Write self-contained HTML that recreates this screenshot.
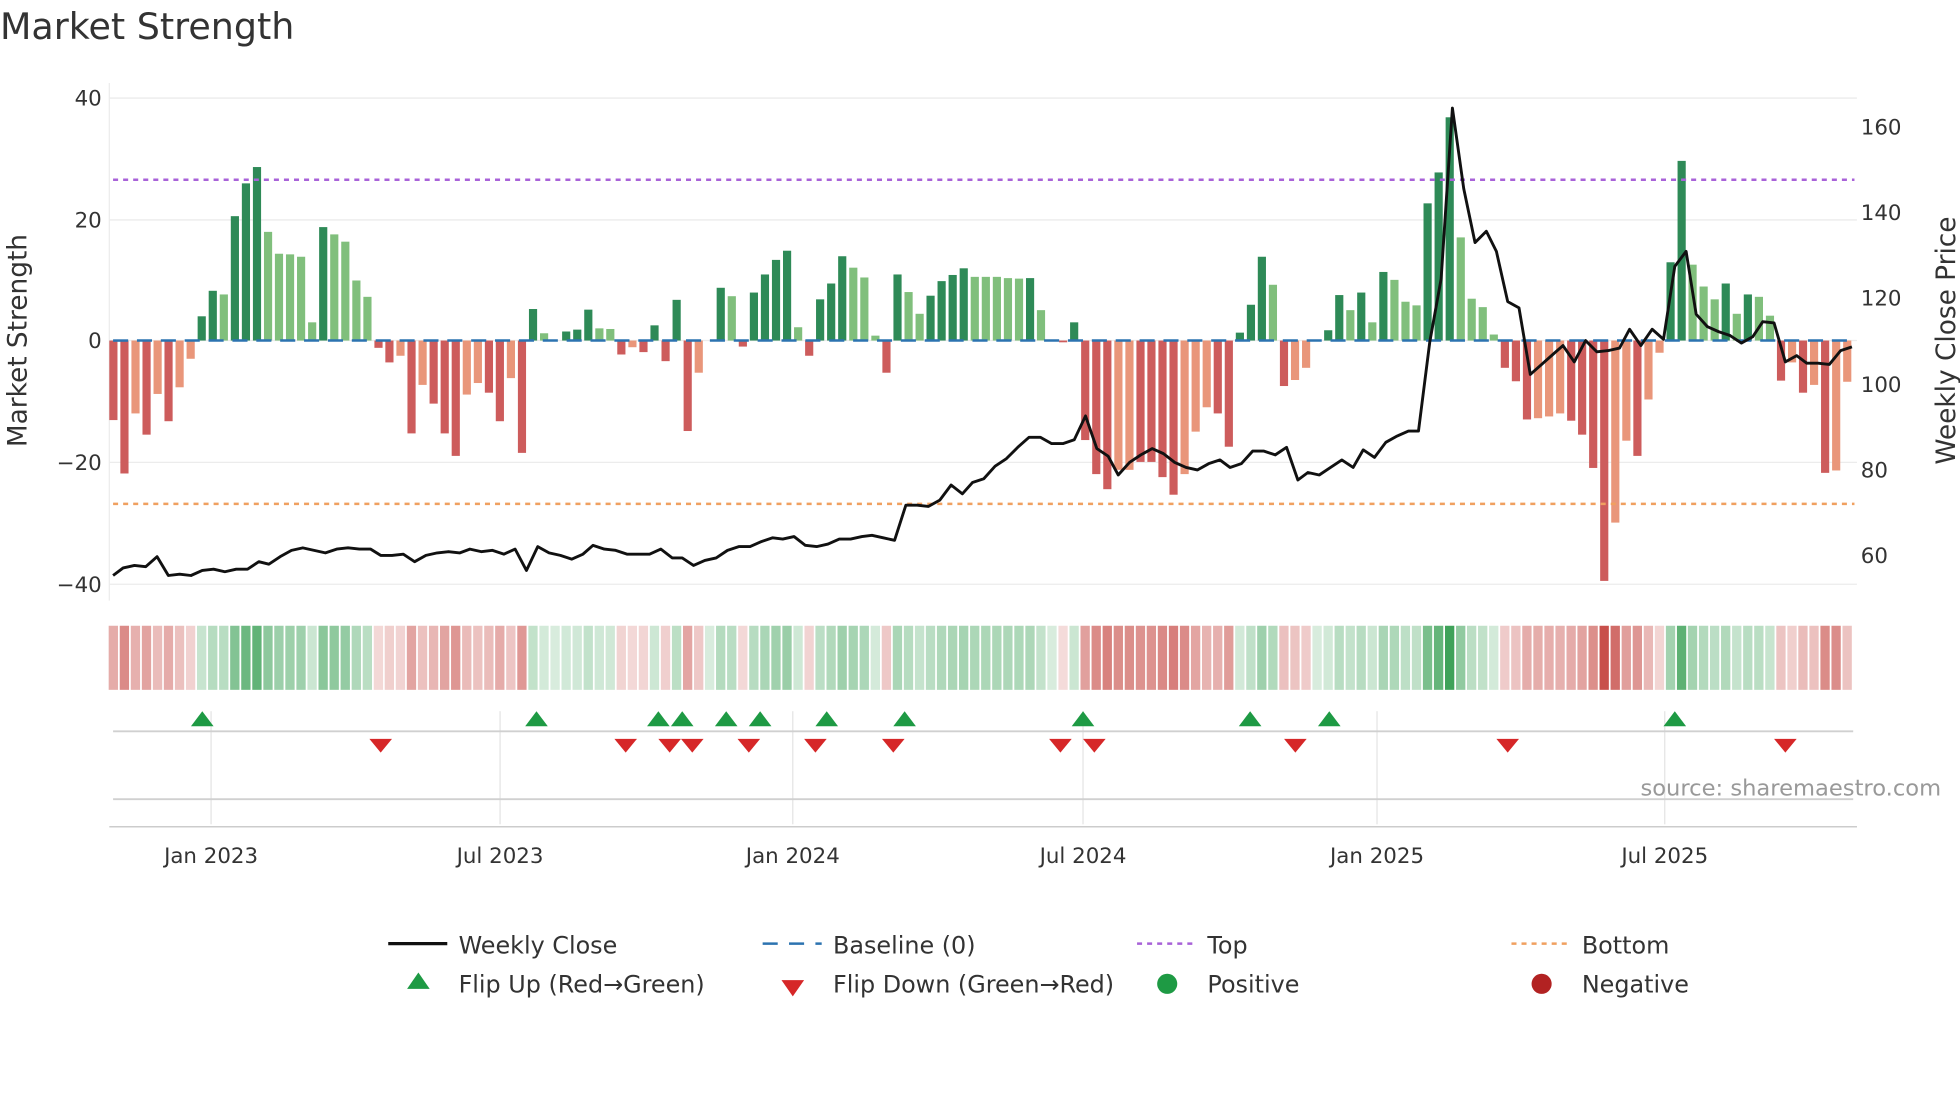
<!DOCTYPE html>
<html><head><meta charset="utf-8"><style>
html,body{margin:0;padding:0;background:#fff;}
svg{display:block;font-family:"DejaVu Sans","Liberation Sans",sans-serif;}
</style></head><body>
<svg id="s" width="1960" height="1102" viewBox="0 0 1560 877" xmlns="http://www.w3.org/2000/svg">
<rect width="1560" height="877" fill="#fff"/>
<text x="0" y="31" font-size="29" fill="#333">Market Strength</text>
<g stroke="#ececec" stroke-width="1">
<line x1="87" y1="78" x2="1478" y2="78"/><line x1="87" y1="175" x2="1478" y2="175"/>
<line x1="87" y1="271" x2="1478" y2="271"/><line x1="87" y1="368" x2="1478" y2="368"/>
<line x1="87" y1="465" x2="1478" y2="465"/>
<line x1="87" y1="66" x2="87" y2="478"/>
</g>
<g font-size="17" fill="#333" text-anchor="end">
<text x="81" y="84">40</text><text x="81" y="181">20</text><text x="81" y="277">0</text>
<text x="81" y="374">−20</text><text x="81" y="471">−40</text>
</g>
<g font-size="17" fill="#333">
<text x="1481" y="107">160</text><text x="1481" y="175">140</text><text x="1481" y="243">120</text>
<text x="1481" y="312">100</text><text x="1481" y="380">80</text><text x="1481" y="448">60</text>
</g>
<text transform="translate(21,271) rotate(-90)" font-size="21" fill="#333" text-anchor="middle">Market Strength</text>
<text transform="translate(1556,271) rotate(-90)" font-size="21" fill="#333" text-anchor="middle">Weekly Close Price</text>
<g id="bars"></g>
<line x1="90" y1="143" x2="1476" y2="143" stroke="#a862d8" stroke-width="2" stroke-dasharray="4,4"/>
<line x1="90" y1="401" x2="1476" y2="401" stroke="#f0a060" stroke-width="2" stroke-dasharray="4,4"/>
<line x1="90" y1="271" x2="1476" y2="271" stroke="#2c73b0" stroke-width="2" stroke-dasharray="12,7"/>
<polyline id="price" fill="none" stroke="#111" stroke-width="2.3" stroke-linejoin="round" points=""/>
<g id="heat"></g>
<g stroke="#e4e4e4" stroke-width="1">
<line x1="168" y1="566" x2="168" y2="656"/><line x1="398" y1="566" x2="398" y2="656"/>
<line x1="631" y1="566" x2="631" y2="656"/><line x1="862" y1="566" x2="862" y2="656"/>
<line x1="1096" y1="566" x2="1096" y2="656"/><line x1="1325" y1="566" x2="1325" y2="656"/>
</g>
<line x1="90" y1="582" x2="1475" y2="582" stroke="#d0d0d0" stroke-width="1.5"/>
<line x1="90" y1="636" x2="1475" y2="636" stroke="#d0d0d0" stroke-width="1.5"/>
<line x1="87" y1="658" x2="1478" y2="658" stroke="#ccc" stroke-width="1.2"/>
<g id="flips"></g>
<text x="1545" y="633" font-size="18" fill="#999" text-anchor="end">source: sharemaestro.com</text>
<g font-size="17" fill="#333" text-anchor="middle">
<text x="168" y="687">Jan 2023</text><text x="398" y="687">Jul 2023</text><text x="631" y="687">Jan 2024</text>
<text x="862" y="687">Jul 2024</text><text x="1096" y="687">Jan 2025</text><text x="1325" y="687">Jul 2025</text>
</g>
<g font-size="19" fill="#333">
<line x1="309" y1="751" x2="356" y2="751" stroke="#111" stroke-width="2.5"/>
<text x="365" y="759">Weekly Close</text>
<line x1="607" y1="751" x2="654" y2="751" stroke="#2c73b0" stroke-width="2" stroke-dasharray="12,9"/>
<text x="663" y="759">Baseline (0)</text>
<line x1="905" y1="751" x2="952" y2="751" stroke="#a862d8" stroke-width="2" stroke-dasharray="4,4"/>
<text x="961" y="759">Top</text>
<line x1="1203" y1="751" x2="1250" y2="751" stroke="#f0a060" stroke-width="2" stroke-dasharray="4,4"/>
<text x="1259" y="759">Bottom</text>
<polygon points="333,774 324,787 342,787" fill="#1e9a44"/>
<text x="365" y="790">Flip Up (Red→Green)</text>
<polygon points="631,793 622,780 640,780" fill="#d62728"/>
<text x="663" y="790">Flip Down (Green→Red)</text>
<circle cx="929" cy="783" r="8" fill="#1e9a44"/>
<text x="961" y="790">Positive</text>
<circle cx="1227" cy="783" r="8" fill="#b22222"/>
<text x="1259" y="790">Negative</text>
</g>
</svg>
<script>
var raw="-13.1r,-21.9r,-12o,-15.5r,-8.8o,-13.3r,-7.7o,-3o,4d,8.2d,7.6l,20.5d,25.9d,28.6d,17.9l,14.3l,14.2l,13.8l,3l,18.7d,17.5l,16.3l,9.9l,7.2l,-1.2r,-3.6r,-2.5o,-15.3r,-7.3o,-10.4r,-15.3r,-19r,-8.9o,-7o,-8.6r,-13.3r,-6.2o,-18.5r,5.2d,1.2l,0d,1.5d,1.8d,5.1d,2l,1.9l,-2.3r,-1.1o,-1.9r,2.5d,-3.4r,6.7d,-14.9r,-5.3o,0d,8.7d,7.3l,-1r,7.9d,10.9d,13.3d,14.8d,2.2l,-2.5r,6.8d,9.4d,13.9d,12l,10.4l,0.8l,-5.3r,10.9d,8l,4.4l,7.4d,9.8d,10.8d,11.9d,10.5l,10.5l,10.5l,10.3l,10.2l,10.3d,5l,0d,-0.3r,3d,-16.4r,-22r,-24.5r,-21.3o,-21.3o,-20r,-20r,-22.5r,-25.4r,-22o,-15o,-11o,-12r,-17.5r,1.3d,5.9d,13.8d,9.2l,-7.5r,-6.5o,-4.5o,0d,1.7d,7.5d,5l,7.9d,3l,11.3d,10l,6.4l,5.8l,22.6d,27.7d,36.8d,17l,6.9l,5.5l,1l,-4.5r,-6.7r,-13r,-12.8o,-12.5o,-12o,-13.2r,-15.5r,-21r,-39.6r,-30o,-16.5o,-19r,-9.7o,-2o,12.9d,29.6d,12.5l,8.9l,6.8l,9.4d,4.4l,7.6d,7.2l,4.1l,-6.6r,-3.6o,-8.6r,-7.3o,-21.8r,-21.4o,-6.8o".split(",");
var NS="http://www.w3.org/2000/svg";
function el(t,a,p){var e=document.createElementNS(NS,t);for(var k in a)e.setAttribute(k,a[k]);p.appendChild(e);return e;}
var bars=document.getElementById("bars"),heat=document.getElementById("heat");
var col={d:"#2e8a57",l:"#80bf7c",r:"#cd5c5c",o:"#e9967a"};
var n=raw.length,step=(1473.5-6.5-87)/(n-1);
function mix(c,t){var w=[255,255,255];return "rgb("+c.map(function(v,i){return Math.round(w[i]+(v-w[i])*t)}).join(",")+")";}
raw.forEach(function(s,i){
 var f=s.slice(-1),v=parseFloat(s);var x=87+i*step;
 var y0=271,h=Math.abs(v)*4.83;
 if(h>0.3) el("rect",{x:x.toFixed(1),y:(v>0?y0-h:y0).toFixed(1),width:6.5,height:h.toFixed(1),fill:col[f]},bars);
 var t=0.2+0.8*Math.min(Math.abs(v)/38,1);
 var c=v>=0?mix([58,160,85],t):mix([200,80,75],t);
 el("rect",{x:(x-0.5).toFixed(1),y:498,width:7.4,height:51,fill:c},heat);
});
var pts="90,458 98,452 107,450 116,451 125,443 134,458 143,457 152,458 161,454 170,453 179,455 188,453 197,453 206,447 214,449 223,443 232,438 241,436 250,438 259,440 268,437 277,436 286,437 295,437 303,442 312,442 321,441 330,447 339,442 348,440 357,439 366,440 374,437 383,439 392,438 401,441 410,437 419,454 428,435 437,440 446,442 455,445 464,441 472,434 481,437 490,438 499,441 508,441 517,441 526,437 535,444 543,444 552,450 561,446 570,444 579,438 588,435 597,435 606,431 615,428 623,429 632,427 641,434 650,435 659,433 668,429 677,429 686,427 694,426 703,428 712,430 721,402 730,402 739,403 748,398 757,386 766,393 774,384 783,381 792,371 801,365 810,356 819,348 828,348 837,353 846,353 855,350 864,331 873,357 882,363 890,378 899,368 908,362 917,357 926,361 935,368 944,372 953,374 962,369 971,366 979,372 988,369 997,359 1006,359 1015,362 1024,356 1033,382 1041,376 1050,378 1059,372 1068,366 1077,372 1085,358 1094,364 1103,352 1112,347 1121,343 1129,343 1138,272 1147,222 1156,86 1165,150 1174,193 1183,184 1191,200 1200,240 1209,245 1218,298 1227,290 1236,282 1244,275 1253,288 1262,271 1271,280 1280,279 1289,277 1297,262 1306,275 1315,262 1324,270 1333,212 1342,200 1350,250 1359,260 1368,264 1377,267 1386,273 1395,268 1403,256 1412,257 1421,288 1430,283 1438,289 1447,289 1456,290 1465,279 1474,276";
document.getElementById("price").setAttribute("points",pts);
var fl=document.getElementById("flips");
[161,427,524,543,578,605,658,720,862,995,1058,1333].forEach(function(x){el("polygon",{points:x+",566 "+(x-9)+",578 "+(x+9)+",578",fill:"#1e9a44"},fl);});
[303,498,533,551,596,649,711,844,871,1031,1200,1421].forEach(function(x){el("polygon",{points:x+",599 "+(x-9)+",588 "+(x+9)+",588",fill:"#d62728"},fl);});
</script>
</body></html>
